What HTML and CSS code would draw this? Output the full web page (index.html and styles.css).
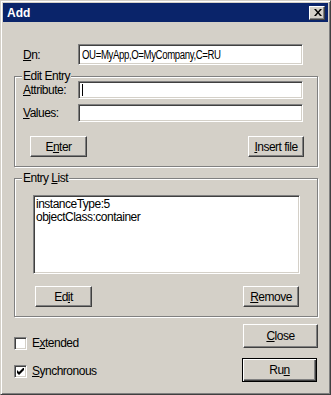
FILE: index.html
```html
<!DOCTYPE html>
<html>
<head>
<meta charset="utf-8">
<link rel="stylesheet" href="styles.css">
</head>
<body>
<div class="window">
  <div class="titlebar">
    <span class="title">Add</span>
    <span class="closebtn"><svg width="8" height="7" viewBox="0 0 8 7"><path d="M0 0h2l2 2.5L6 0h2L5 3.5 8 7H6L4 4.5 2 7H0l3-3.5z" fill="#000"/></svg></span>
  </div>
  <div class="content">
    <div class="row dnrow">
      <label class="lbl"><u>D</u>n:</label>
      <div class="input"><span class="narrow">OU=MyApp,O=MyCompany,C=RU</span></div>
    </div>

    <div class="group g1">
      <span class="legend">Edit Entry</span>
      <div class="row arow">
        <label class="lbl lbl2"><u>A</u>ttribute:</label>
        <div class="input small"><span class="caret"></span></div>
      </div>
      <div class="row vrow">
        <label class="lbl lbl2"><u>V</u>alues:</label>
        <div class="input small"></div>
      </div>
      <div class="btnrow b1">
        <div class="btn enter"><span>E<u>n</u>ter</span></div>
        <div class="btn insert"><span><u>I</u>nsert file</span></div>
      </div>
    </div>

    <div class="group g2">
      <span class="legend">Entry <u>L</u>ist</span>
      <div class="listbox">
        <div>instanceType:5</div>
        <div>objectClass:container</div>
      </div>
      <div class="btnrow b2">
        <div class="btn edit"><span>Ed<u>i</u>t</span></div>
        <div class="btn remove"><span><u>R</u>emove</span></div>
      </div>
    </div>

    <div class="bottom">
      <div class="checks">
        <div class="check c1"><span class="box"></span><span>E<u>x</u>tended</span></div>
        <div class="check c2"><span class="box"><svg width="7" height="7" viewBox="0 0 7 7"><path d="M0 2v3l2 2 5-5V-1L2 4z" fill="#000"/></svg></span><span><u>S</u>ynchronous</span></div>
      </div>
      <div class="actions">
        <div class="btn close"><span><u>C</u>lose</span></div>
        <div class="btn run"><span>Ru<u>n</u></span></div>
      </div>
    </div>
  </div>
</div>
</body>
</html>
```

FILE: styles.css
```css
html, body {
  margin: 0;
  padding: 0;
  background: #d4d0c8;
}
body {
  font-family: "Liberation Sans", Arial, sans-serif;
  font-size: 12px;
  letter-spacing: -0.5px;
  color: #000;
}
u { text-decoration: underline; text-underline-offset: 1px; }

.window {
  width: 331px;
  height: 395px;
  box-sizing: border-box;
  background: #d4d0c8;
  border-top: 1px solid #d4d0c8;
  border-left: 1px solid #d4d0c8;
  border-right: 1px solid #404040;
  border-bottom: 1px solid #404040;
  box-shadow: inset 1px 1px #fff, inset -1px -1px #808080;
  padding: 2px;
}
.titlebar {
  height: 19px;
  background: #0a246a;
  display: flex;
  align-items: center;
  justify-content: space-between;
  padding: 0 3px 0 4px;
}
.title {
  color: #fff;
  font-weight: bold;
  font-size: 12px;
  letter-spacing: 0;
}
.closebtn {
  width: 16px;
  height: 14px;
  box-sizing: border-box;
  background: #d4d0c8;
  border-top: 1px solid #fff;
  border-left: 1px solid #fff;
  border-right: 1px solid #404040;
  border-bottom: 1px solid #404040;
  box-shadow: inset -1px -1px #808080;
  display: flex;
  align-items: center;
  justify-content: center;
  padding-left: 1px;
}

.content {
  padding: 0 10px 0 11px;
}
.row {
  display: flex;
  align-items: center;
}
.dnrow {
  margin-top: 22px;
  height: 21px;
}
.lbl {
  width: 55px;
  padding-left: 9px;
}
.lbl2 {
  width: 55px;
  padding-left: 8px;
}
.input {
  width: 225px;
  height: 21px;
  box-sizing: border-box;
  background: #fff;
  border-top: 1px solid #808080;
  border-left: 1px solid #808080;
  border-right: 1px solid #fff;
  border-bottom: 1px solid #fff;
  box-shadow: inset 1px 1px #404040, inset -1px -1px #d4d0c8;
  padding: 3px 0 0 3px;
  line-height: 14px;
  white-space: nowrap;
  overflow: hidden;
}
.narrow {
  display: inline-block;
  font-size: 12.5px;
  transform: scaleX(0.77);
  transform-origin: left center;
}
.input.small {
  height: 18px;
  position: relative;
}
.caret {
  display: block;
  width: 1px;
  height: 12px;
  background: #000;
  margin-top: -1px;
}

.group {
  position: relative;
  box-sizing: border-box;
  border: 1px solid #808080;
  box-shadow: inset 1px 1px #fff, 1px 1px #fff;
}
.legend {
  position: absolute;
  top: -8px;
  left: 7px;
  padding: 0 1px;
  background: #d4d0c8;
  line-height: 14px;
}
.g1 {
  margin-top: 11px;
  height: 91px;
  padding-top: 4px;
}
.vrow { margin-top: 5px; }
.btnrow {
  display: flex;
  justify-content: space-between;
}
.b1 {
  margin-top: 14px;
  padding-left: 15px;
  padding-right: 13px;
}
.btn {
  height: 21px;
  box-sizing: border-box;
  background: #d4d0c8;
  border-top: 1px solid #fff;
  border-left: 1px solid #fff;
  border-right: 1px solid #404040;
  border-bottom: 1px solid #404040;
  box-shadow: inset -1px -1px #808080;
  display: flex;
  align-items: center;
  justify-content: center;
}
.enter, .edit { width: 57px; }
.insert, .remove { width: 56px; }

.g2 {
  margin-top: 11px;
  height: 139px;
  padding: 16px 17px 0 18px;
}
.listbox {
  height: 79px;
  box-sizing: border-box;
  background: #fff;
  border-top: 1px solid #808080;
  border-left: 1px solid #808080;
  border-right: 1px solid #fff;
  border-bottom: 1px solid #fff;
  box-shadow: inset 1px 1px #404040, inset -1px -1px #d4d0c8;
  padding: 2px 3px 2px 2px;
  line-height: 13px;
}
.b2 {
  margin-top: 12px;
  padding-left: 2px;
  padding-right: 1px;
}

.bottom {
  display: flex;
  justify-content: space-between;
  margin-top: 7px;
}
.checks {
  padding-top: 12px;
}
.check {
  display: flex;
  align-items: center;
  height: 14px;
}
.c2 { margin-top: 14px; }
.box {
  width: 13px;
  height: 13px;
  box-sizing: border-box;
  background: #fff;
  border-top: 1px solid #808080;
  border-left: 1px solid #808080;
  border-right: 1px solid #fff;
  border-bottom: 1px solid #fff;
  box-shadow: inset 1px 1px #404040, inset -1px -1px #d4d0c8;
  margin-right: 5px;
  display: flex;
  align-items: center;
  justify-content: center;
}
.actions {
  display: flex;
  flex-direction: column;
  align-items: flex-end;
}
.close {
  width: 75px;
  height: 24px;
}
.run {
  width: 75px;
  height: 24px;
  margin-top: 10px;
  margin-right: 1px;
  border: 1px solid #000;
  box-shadow: inset 1px 1px #fff, inset -1px -1px #404040, inset -2px -2px #808080;
}
```
